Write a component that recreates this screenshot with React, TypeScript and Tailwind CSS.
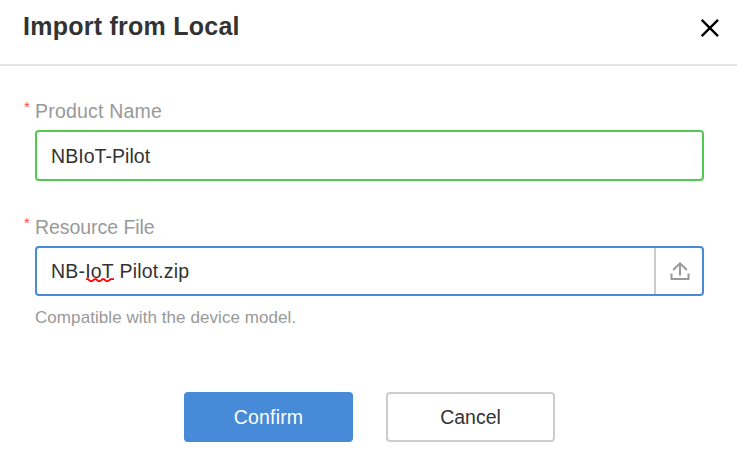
import React from "react";

function Label({ children, spacing }: { children: React.ReactNode; spacing: string }) {
  return (
    <div className="flex h-6 items-center pl-6 text-[19.5px] leading-6 text-[#999]">
      <span className="mb-2 w-[11px] text-[15px] leading-4 text-[#ff4d42]">*</span>
      <span className={`whitespace-nowrap ${spacing}`}>{children}</span>
    </div>
  );
}

export default function App() {
  return (
    <div className="flex h-[463px] w-[737px] flex-col overflow-hidden bg-white font-['Liberation_Sans',Arial,sans-serif] text-[#333]">
      <header className="flex h-[66px] shrink-0 justify-between border-b-2 border-[#e3e3e3] pr-[17px] pl-[23px]">
        <h2 className="pt-[10px] text-[25px] leading-8 font-bold tracking-[0.25px] whitespace-nowrap">
          Import from Local
        </h2>
        <button aria-label="Close" className="mt-[18px] h-5 w-5">
          <svg width="20" height="20" viewBox="0 0 20 20" fill="none" stroke="#000" strokeWidth="2.4">
            <path d="M1.7 1.9 18 18.2M18 1.9 1.7 18.2" />
          </svg>
        </button>
      </header>

      <section className="pt-[33px]">
        <Label spacing="tracking-[0.2px]">Product Name</Label>
        <div className="mt-[7px] mr-[33px] ml-[35px] flex h-[51px] items-center rounded-[4px] border-2 border-[#50cb50] pl-[14px] text-[19.5px] leading-6 tracking-[0.05px]">
          <span>NBIoT-Pilot</span>
        </div>
      </section>

      <section className="pt-[34px]">
        <Label spacing="tracking-[-0.05px]">Resource File</Label>
        <div className="mt-[7px] mr-[33px] ml-[35px] flex h-[50px] rounded-[4px] border-2 border-[#478ad8]">
          <div className="flex flex-1 items-center pl-[14px] text-[19.5px] leading-6 tracking-[0.18px]">
            <span className="whitespace-pre">
              NB-
              <span className="relative inline-block">
                IoT
                <svg className="absolute top-[19px] left-px" width="28" height="5" viewBox="0 0 28 5" fill="none" stroke="#f00" strokeWidth="1.8">
                  <path d="M0 1.2 2 1.2 4.5 3.2 6 3.2 8.5 1.2 10 1.2 12.5 3.2 14 3.2 16.5 1.2 18 1.2 20.5 3.2 22 3.2 24.5 1.2 28 1.2" />
                </svg>
              </span>
              {" Pilot.zip"}
            </span>
          </div>
          <button aria-label="Upload" className="flex w-[48px] items-center justify-center border-l-2 border-[#ccc] pl-[2px]">
            <svg width="20" height="20" viewBox="0 0 20 20" fill="none" stroke="#999" strokeWidth="2">
              <path d="M10 14.5V2M3.2 9 10 2.4 16.8 9M1.5 12.5V18H18.5V12.5" />
            </svg>
          </button>
        </div>
        <p className="mt-[11px] ml-[35px] text-[17px] leading-[22px] tracking-[0.07px] whitespace-nowrap text-[#999]">
          Compatible with the device model.
        </p>
      </section>

      <footer className="mt-[63px] flex gap-[33px] pl-[184px] text-[19.5px] leading-6">
        <button className="h-[50px] w-[169px] rounded-[4px] bg-[#478ad8] tracking-[0.2px] text-white">Confirm</button>
        <button className="h-[50px] w-[169px] rounded-[4px] border-2 border-[#ccc] bg-white">Cancel</button>
      </footer>
    </div>
  );
}
